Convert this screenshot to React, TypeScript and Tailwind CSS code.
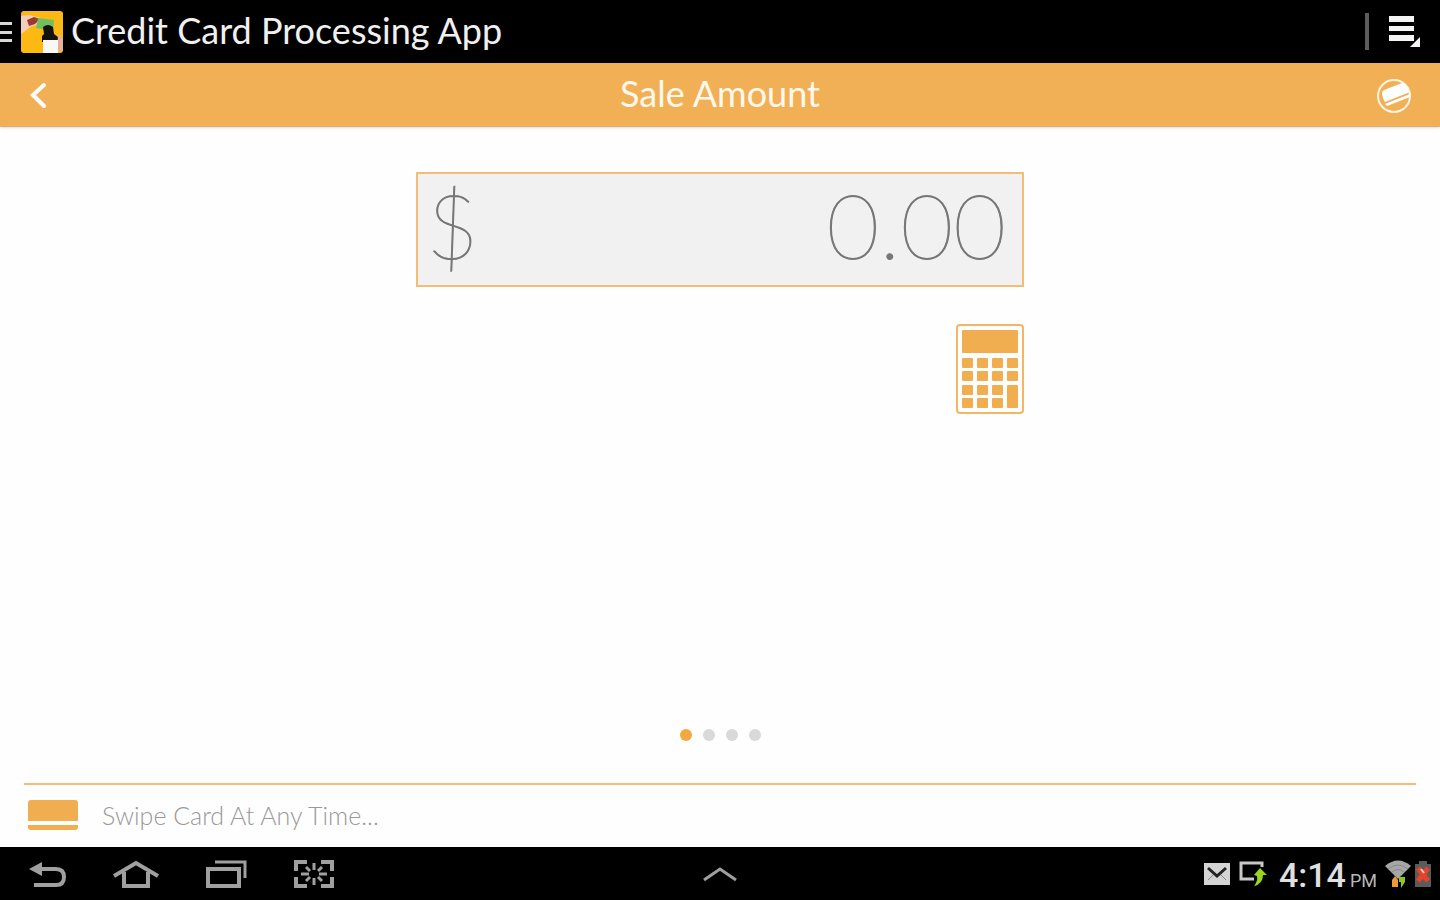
import { useState } from "react";

const DOTS = [0, 1, 2, 3];
const KEY_COLS = [6, 21, 36, 51];
const KEY_ROWS = [34, 47, 61, 74];

function AppLogo() {
  return (
    <svg width="42" height="42" viewBox="0 0 42 42" aria-hidden="true">
      <defs>
        <clipPath id="logo-clip">
          <rect width="42" height="42" rx="3" />
        </clipPath>
      </defs>
      <g clipPath="url(#logo-clip)">
        <rect width="42" height="42" fill="#fdb913" />
        <path d="M0 5 L8 4 L20 7 L18 13 L9 16 L3 21 L0 23 Z" fill="#f3cdb8" />
        <path d="M6 9 L13 6 L19 8 L14 13 L8 15 Z" fill="#9c3b2c" />
        <path d="M17 7 L33 9 L32 20 L15 17 Z" fill="#72bf62" />
        <path d="M22 16 Q27 12 32 16 L33 23 L37 26 V31 H21 V25 L23 23 Z" fill="#15130f" />
        <path d="M37 24 L42 27 V40 H36 Z" fill="#e3b09a" />
        <rect x="22" y="29" width="15" height="13" fill="#f8f8f6" />
      </g>
    </svg>
  );
}

function CalculatorIcon() {
  return (
    <svg width="68" height="90" viewBox="0 0 68 90" aria-hidden="true">
      <rect x="1" y="1" width="66" height="88" rx="3" fill="#fefefe" stroke="#f3b667" strokeWidth="2" />
      <rect x="6" y="6" width="56" height="23" rx="1" fill="#f1ae51" />
      {KEY_ROWS.map((y, row) =>
        KEY_COLS.map((x, col) =>
          col === 3 && row > 1 ? null : (
            <rect key={`${row}-${col}`} x={x} y={y} width="11" height="10" rx="1" fill="#f1ae51" />
          )
        )
      )}
      <rect x="51" y="61" width="11" height="23" rx="1" fill="#f1ae51" />
    </svg>
  );
}

function Header() {
  return (
    <header className="flex h-[63px] items-center bg-black text-[#f0f0f0]">
      <button aria-label="Open drawer" className="flex items-center gap-2">
        <svg width="13" height="22" viewBox="0 0 13 22" fill="#d8d8d8" aria-hidden="true">
          <rect y="1" width="12" height="3" />
          <rect y="10" width="12" height="3" />
          <rect y="18" width="12" height="3" />
        </svg>
        <AppLogo />
      </button>
      <h1 className="ml-2 pb-1 text-4xl leading-10">Credit Card Processing App</h1>
      <div className="mr-[19px] ml-auto flex items-center gap-5">
        <span className="h-[37px] w-1 bg-[#5c5c5c]" />
        <button aria-label="Menu">
          <svg width="32" height="33" viewBox="0 0 32 33" fill="#f4f4f4" aria-hidden="true">
            <rect x="0" y="1" width="25" height="6" />
            <rect x="0" y="11" width="25" height="5" />
            <rect x="0" y="20" width="25" height="6" />
            <path d="M31 22 V32 H21 Z" />
          </svg>
        </button>
      </div>
    </header>
  );
}

function TitleBar() {
  return (
    <div className="grid h-16 grid-cols-3 items-center border-b border-[#d8b078] bg-[#f2b056] px-7 text-white shadow-sm">
      <button aria-label="Back" className="justify-self-start">
        <svg width="20" height="28" viewBox="0 0 20 28" fill="none" stroke="#fff" strokeWidth="4" strokeLinecap="round" aria-hidden="true">
          <path d="M16 4 L5 14 L16 25" />
        </svg>
      </button>
      <h2 className="pb-1 text-center text-4xl leading-10 text-[#fff8ec]">Sale Amount</h2>
      <button aria-label="Card reader" className="justify-self-end">
        <svg width="36" height="36" viewBox="0 0 36 36" aria-hidden="true">
          <defs>
            <clipPath id="reader-clip">
              <circle cx="18" cy="19" r="16" />
            </clipPath>
          </defs>
          <circle cx="18" cy="19" r="16" fill="none" stroke="#fff4e2" strokeWidth="2" />
          <g clipPath="url(#reader-clip)" fill="#fff">
            <path d="M6 17 Q6 14 8 13 L26 6 Q29 5 30 7 L34 15 L9 25 Q7 22 6 17 Z" />
            <path d="M9 27 L34 17 V20 L11 29 Z" />
          </g>
        </svg>
      </button>
    </div>
  );
}

function SystemBar() {
  return (
    <nav className="grid h-[53px] grid-cols-3 items-center bg-black text-[#a0a0a0]">
      <div className="ml-7 flex items-center gap-[47px]">
        <button aria-label="Back">
          <svg width="38" height="28" viewBox="0 0 38 28" fill="none" stroke="currentColor" strokeWidth="4" aria-hidden="true">
            <path d="M10 9 H28 Q36 9 36 17 Q36 25 28 25 H6" />
            <path d="M1 9 L14 2 V16 Z" fill="currentColor" stroke="none" />
          </svg>
        </button>
        <button aria-label="Home">
          <svg width="46" height="28" viewBox="0 0 46 28" fill="none" stroke="currentColor" strokeWidth="4" aria-hidden="true">
            <path d="M1 16 L23 3 L45 16" />
            <path d="M11 12 V26 H35 V12" />
          </svg>
        </button>
        <button aria-label="Recent apps">
          <svg width="41" height="28" viewBox="0 0 41 28" fill="none" stroke="currentColor" aria-hidden="true">
            <rect x="2" y="9" width="31" height="17" strokeWidth="4" />
            <path d="M9 2 H39 V18" strokeWidth="3" />
          </svg>
        </button>
        <button aria-label="Screenshot">
          <svg width="40" height="28" viewBox="0 0 40 28" fill="none" stroke="currentColor" strokeWidth="4" aria-hidden="true">
            <path d="M2 11 V2 H13 M27 2 H38 V11 M38 17 V26 H27 M13 26 H2 V17" />
            <path
              d="M20 3 V10 M20 18 V25 M7 14 H15 M25 14 H33 M12 7 L16 11 M28 7 L24 11 M12 21 L16 17 M28 21 L24 17"
              strokeWidth="3"
            />
          </svg>
        </button>
      </div>

      <button aria-label="Expand tray" className="justify-self-center">
        <svg width="36" height="16" viewBox="0 0 36 16" fill="none" stroke="currentColor" strokeWidth="3" aria-hidden="true">
          <path d="M2 14 L18 3 L34 14" />
        </svg>
      </button>

      <div className="mr-[9px] flex items-center gap-2 justify-self-end text-[#e0e0e0]">
        <svg width="28" height="22" viewBox="0 0 28 22" aria-hidden="true">
          <rect x="1" width="26" height="22" fill="#d4d4d4" />
          <path d="M5 5 L14 13 L23 5" fill="none" stroke="#222" strokeWidth="3" />
          <path d="M5 17 L10 12 M23 17 L18 12" stroke="#888" strokeWidth="1" />
        </svg>
        <svg width="28" height="26" viewBox="0 0 28 26" aria-hidden="true">
          <path d="M23 6 V2 H2 V18 H15" fill="none" stroke="#c8c8c8" strokeWidth="3" />
          <path d="M21 7 L28 14 L24 14 Q24 23 15 25 Q19 20 18 15 L15 14 Z" fill="#99d51c" />
        </svg>
        <div className="ml-1 flex items-baseline gap-1 pt-0.5 font-[Roboto,sans-serif]">
          <span className="text-[34px] leading-10 font-medium">4:14</span>
          <span className="text-lg text-[#b8b8b8]">PM</span>
        </div>
        <div className="flex items-center gap-1">
          <svg width="26" height="30" viewBox="0 0 26 30" aria-hidden="true">
            <path d="M0 7 Q13 -4 26 7 L13 20 Z" fill="#a6a6a6" />
            <path d="M3 10 Q13 2 23 10 M7 13 Q13 8 19 13" fill="none" stroke="#8a8a8a" strokeWidth="1" />
            <path d="M10 17 L13 21 V28 H7 V21 Z" fill="#ef9a35" />
            <path d="M14 18 H20 V23 L16 29 V23 H14 Z" fill="#8cc81e" />
          </svg>
          <svg width="16" height="26" viewBox="0 0 16 26" aria-hidden="true">
            <path d="M4 3 V0 H12 V3 H16 V26 H0 V3 Z" fill="#5b5b5b" />
            <path d="M3 7 L13 20 M13 7 L3 20" stroke="#e8432a" strokeWidth="5" />
            <path d="M6 8 L9 12" stroke="#f6d0c4" strokeWidth="2" />
          </svg>
        </div>
      </div>
    </nav>
  );
}

export default function App() {
  const [amount, setAmount] = useState("0.00");
  const [page, setPage] = useState(0);

  return (
    <div className="flex min-h-screen flex-col bg-[#fefefe] font-[Lato,sans-serif]">
      <Header />
      <TitleBar />

      <main className="flex flex-1 flex-col items-center pt-[45px]">
        <div className="flex w-[608px] max-w-full flex-col items-end gap-[37px]">
          <div className="flex h-[115px] w-full items-center border-2 border-[#f3bd78] bg-[#f1f1f1] pr-4 pb-3 pl-2 text-[91px] leading-[100px] font-thin text-[#777] [-webkit-text-stroke:1px_#777]">
            <label htmlFor="amount">$</label>
            <input
              id="amount"
              value={amount}
              onChange={(e) => setAmount(e.target.value)}
              className="min-w-0 flex-1 bg-transparent text-right outline-none"
            />
          </div>
          <button aria-label="Calculator">
            <CalculatorIcon />
          </button>
        </div>

        <div className="mt-auto mb-[42px] flex gap-[11px]">
          {DOTS.map((dot) => (
            <button
              key={dot}
              aria-label={`Page ${dot + 1}`}
              onClick={() => setPage(dot)}
              className={`size-3 rounded-full ${dot === page ? "bg-[#f1a941]" : "bg-[#d9d9d9]"}`}
            />
          ))}
        </div>
      </main>

      <footer className="mx-6 flex h-16 items-center gap-6 border-t-2 border-[#f3bd78] px-1 pb-0.5">
        <svg width="50" height="32" viewBox="0 0 50 32" fill="#f1ae51" aria-hidden="true">
          <path d="M3 1 H47 Q50 1 50 4 V22 H0 V4 Q0 1 3 1 Z" />
          <path d="M0 26 H50 V28 Q50 31 47 31 H3 Q0 31 0 28 Z" />
        </svg>
        <p className="text-[25px] leading-8 font-light text-[#999]">Swipe Card At Any Time...</p>
      </footer>

      <SystemBar />
    </div>
  );
}
